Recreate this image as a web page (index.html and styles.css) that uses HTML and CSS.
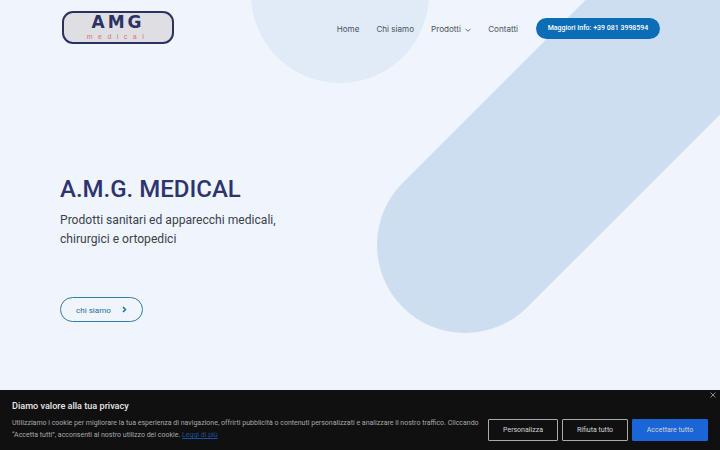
FILE: index.html
```html
<!DOCTYPE html>
<html lang="it">
<head>
    <meta charset="UTF-8">
    <meta name="viewport" content="width=device-width, initial-scale=1.0">
    <title>A.M.G. Medical</title>
    <link rel="stylesheet" href="styles.css">
</head>
<body>
    <!-- forme decorative dello sfondo -->
    <svg class="bg-shapes" width="720" height="450" viewBox="0 0 720 450" aria-hidden="true">
        <circle cx="340" cy="-6" r="89" fill="#e0ebf7"/>
        <line x1="465" y1="245" x2="900" y2="-190" stroke="#cddef0" stroke-width="176" stroke-linecap="round"/>
    </svg>

    <div class="header">
        <div class="logo">
            <div class="logo-amg">AMG</div>
            <div class="logo-sub">medical</div>
        </div>
        <div class="nav">
            <a class="nav-link" href="#">Home</a>
            <a class="nav-link" href="#">Chi siamo</a>
            <a class="nav-link" href="#">Prodotti
                <svg class="nav-arrow" width="6" height="4" viewBox="0 0 6 4"><path d="M.5.8l2.500 2.500 2.500-2.500" fill="none" stroke="#4d5566" stroke-width=".9"/></svg>
            </a>
            <a class="nav-link" href="#">Contatti</a>
            <a class="nav-button" href="#">Maggiori Info: +39 081 3998594</a>
        </div>
    </div>

    <div class="hero">
        <h1>A.M.G. MEDICAL</h1>
        <p class="hero-text">Prodotti sanitari ed apparecchi medicali,<br>chirurgici e ortopedici</p>
        <a class="hero-button" href="#">chi siamo
            <svg width="5" height="7" viewBox="0 0 5 7"><path d="M1 1l2.500 2.500-2.500 2.500" fill="none" stroke="#1f6fa8" stroke-width="1.500"/></svg>
        </a>
    </div>

    <div class="cookie-bar">
        <svg class="cookie-close" width="6" height="6" viewBox="0 0 6 6"><path d="M.5.5l5 5M5.500.5l-5 5" stroke="#8a8a8a" stroke-width="1"/></svg>
        <div class="cookie-title">Diamo valore alla tua privacy</div>
        <div class="cookie-row">
            <p class="cookie-text">Utilizziamo i cookie per migliorare la tua esperienza di navigazione, offrirti pubblicità o contenuti personalizzati e analizzare il nostro traffico. Cliccando “Accetta tutti”, acconsenti al nostro utilizzo dei cookie. <a href="#">Leggi di più</a></p>
            <div class="cookie-buttons">
                <button class="cookie-btn btn-custom">Personalizza</button>
                <button class="cookie-btn btn-reject">Rifiuta tutto</button>
                <button class="cookie-btn btn-accept">Accettare tutto</button>
            </div>
        </div>
    </div>
</body>
</html>
```

FILE: styles.css
```css
* {
    margin: 0;
    padding: 0;
    box-sizing: border-box;
    font-family: Roboto, "Liberation Sans", sans-serif;
}

body {
    background-color: #eff5fb;
    width: 720px;
    height: 450px;
    overflow: hidden;
    position: relative;
}

a {
    text-decoration: none;
}

.bg-shapes {
    position: absolute;
    top: 0;
    left: 0;
}

.header {
    position: relative;
    display: flex;
    justify-content: space-between;
    align-items: flex-start;
    padding: 11px 60px 0 62px;
}

.logo {
    width: 112px;
    height: 33px;
    background-color: #dfdfe3;
    border: 2px solid #2b3263;
    border-radius: 11px;
    text-align: center;
}

.logo-amg {
    font-family: "DejaVu Sans", sans-serif;
    font-size: 17px;
    font-weight: bold;
    line-height: 13px;
    margin-top: 3px;
    letter-spacing: 3px;
    color: #2b3263;
}

.logo-sub {
    font-family: "Liberation Sans", sans-serif;
    font-size: 7px;
    line-height: 8px;
    margin-top: 3.500px;
    letter-spacing: 5.500px;
    color: #d8707a;
}

.nav {
    display: flex;
    align-items: center;
    height: 21px;
    margin-top: 7px;
}

.nav-link {
    font-family: Inter, Roboto, sans-serif;
    color: #4a5262;
    font-weight: 400;
    font-size: 8.100px;
    margin-right: 17px;
    white-space: nowrap;
}

.nav-arrow {
    margin-left: 2px;
}

.nav-button {
    background-color: #0b6db5;
    color: white;
    font-size: 7px;
    font-weight: 500;
    line-height: 20px;
    height: 21px;
    width: 124px;
    text-align: center;
    white-space: nowrap;
    border-radius: 11px;
    margin-left: 1px;
}

.hero {
    position: relative;
    padding: 129px 60px 0;
}

.hero h1 {
    font-size: 24px;
    font-weight: 500;
    line-height: 32px;
    color: #2d3470;
}

.hero-text {
    margin-top: 6px;
    font-size: 12.100px;
    line-height: 19px;
    color: #3c4250;
}

.hero-button {
    display: flex;
    align-items: center;
    justify-content: space-between;
    width: 83px;
    height: 25px;
    margin-top: 48px;
    padding: 0 15px 0 15px;
    border: 1.500px solid #2f7ea8;
    border-radius: 13px;
    color: #1f6fa8;
    font-size: 8.100px;
}

.cookie-bar {
    position: absolute;
    left: 0;
    bottom: 0;
    width: 720px;
    height: 60px;
    background-color: #101010;
    padding: 10px 12px 0 12px;
}

.cookie-close {
    position: absolute;
    top: 2px;
    right: 4px;
}

.cookie-title {
    color: #e8e8e8;
    font-size: 9.100px;
    font-weight: 500;
    line-height: 12px;
}

.cookie-row {
    display: flex;
    justify-content: space-between;
    align-items: flex-start;
}

.cookie-text {
    width: 470px;
    margin-top: 5px;
    color: #a8a8a8;
    font-size: 7px;
    line-height: 12px;
}

.cookie-text a {
    color: #1d4fa0;
    text-decoration: underline;
}

.cookie-buttons {
    display: flex;
    gap: 4px;
    margin-top: 7px;
}

.cookie-btn {
    height: 22px;
    font-size: 7px;
    font-weight: 400;
    color: #d4d4d4;
    border-radius: 1px;
    background-color: #101010;
    border: 1px solid #aaaaaa;
}

.btn-custom {
    width: 70px;
}

.btn-reject {
    width: 66px;
}

.btn-accept {
    width: 76px;
    background-color: #1a66d6;
    border-color: #1a66d6;
}
```
